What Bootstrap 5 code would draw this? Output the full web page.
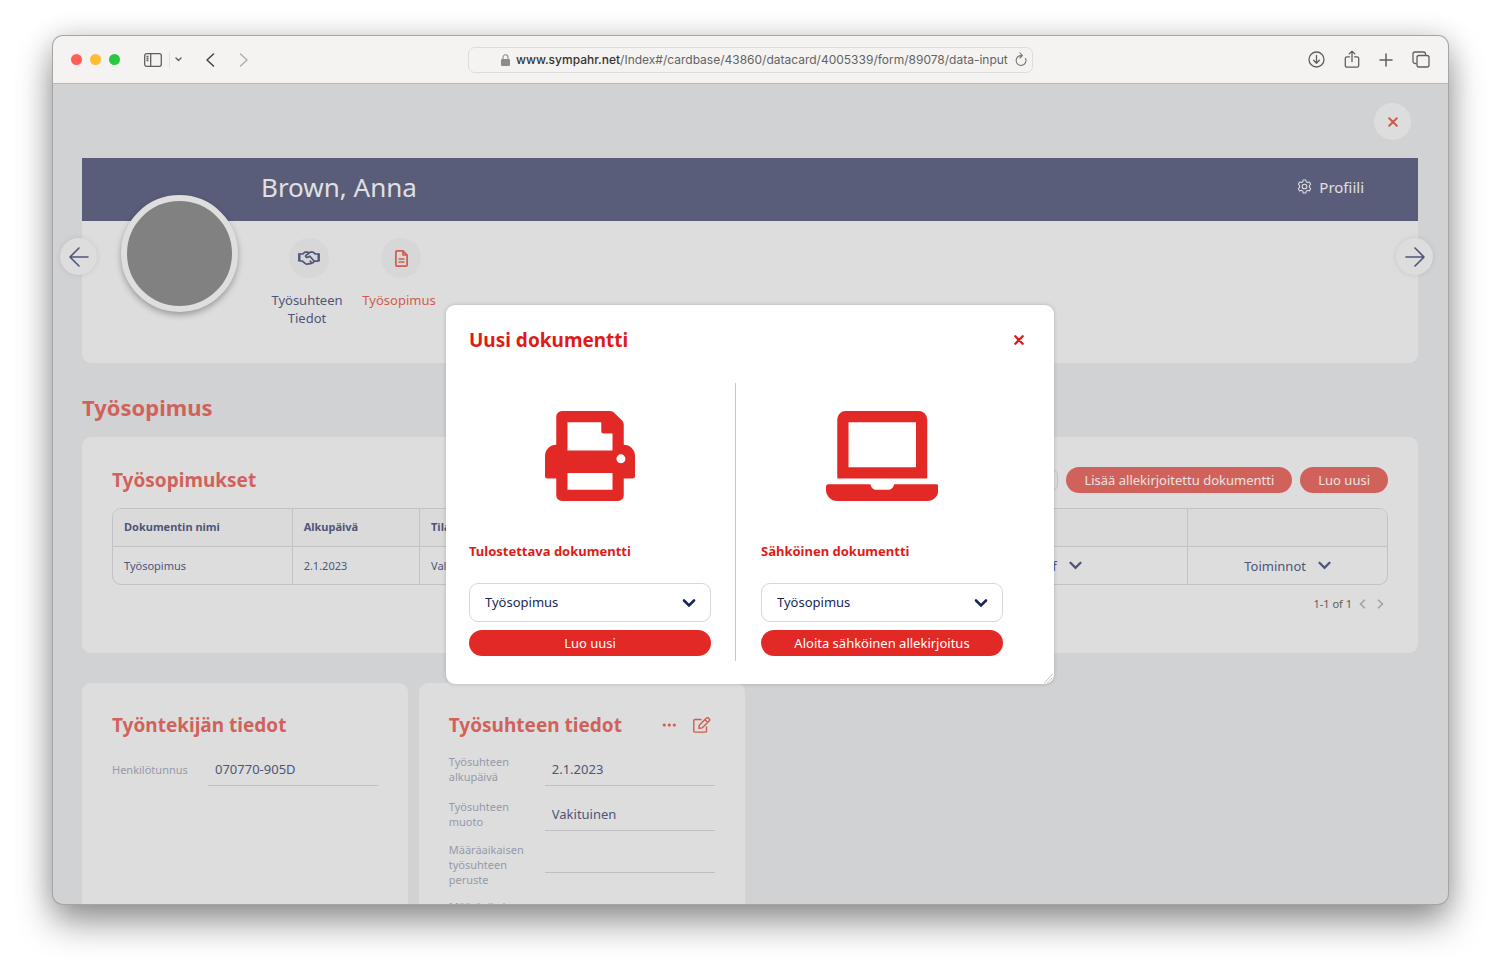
<!DOCTYPE html>
<html lang="fi">
<head>
<meta charset="utf-8">
<meta name="viewport" content="width=device-width, initial-scale=1">
<title>Brown, Anna – Työsopimus</title>
<link href="https://cdn.jsdelivr.net/npm/bootstrap@5.3.0/dist/css/bootstrap.min.css" rel="stylesheet">
<style>
:root{--page:#d1d2d4;--panel:#ddd;--navy:#4f5579;--banner:#595d7a;--coral:#d1625b;--line:#c1c2c6;--red:#e32925;--ink:#1b2559}
body{font-family:"Noto Sans",sans-serif;font-size:13px;line-height:18px;color:var(--navy);background:#fff}
.desktop{height:100vh;padding:36px 52px 69px 53px}
.browser{border-radius:10px;background:var(--page);box-shadow:0 0 0 1px #a5a5a5,0 18px 36px rgba(0,0,0,.42),0 0 28px rgba(0,0,0,.14)}
.toolbar{height:48px;background:#f4f3f1;border-bottom:1px solid #b8b9bc;color:#5f5f5f;padding:0 18px}
.toolbar-side{flex:1 1 0}
.dots{gap:8px}
.tools{gap:19px}
.dot{width:11px;height:11px;border-radius:50%}
.dot-close{background:#ff5f57}.dot-min{background:#febc2e}.dot-max{background:#28c840}
.split{width:1px;height:16px;background:#e2e1df;margin:0 5px 0 7px}
.plain{border:0;background:none;padding:0;color:inherit;display:flex;align-items:center;justify-content:center}
.address{width:565px;height:26px;border:1px solid #dddcda;border-radius:7px;padding:0 5px 0 32px;gap:6px}
.address svg{flex-shrink:0}
.url{font-family:Inter,sans-serif;font-size:12px;color:#636363;flex:1;white-space:nowrap}
.url b{font-weight:500;color:#333}
.viewport-area{min-height:0}
.content{padding:19px 30px 0 29px;height:100%}
.disc{width:37px;height:37px;border-radius:50%;background:var(--panel)}
.top-close{margin:0 7px 18px auto;color:#cf5c4e}
.panel{background:var(--panel);border-radius:9px}
.profile{height:205px;margin-bottom:29px}
.banner{height:63px;background:var(--banner);color:#e0e0e0;padding:0 54px 0 179px}
.banner h1{font-size:26px;line-height:36px;font-weight:400;margin:0 0 6px}
.banner a{font-size:15px;color:inherit;gap:7px;margin-bottom:6px}
.avatar{left:39px;top:37px;width:117px;height:117px;border-radius:50%;background:#818181;border:6px solid #dedede;box-shadow:0 3px 6px rgba(0,0,0,.3)}
.prev,.next{top:80px;color:var(--navy);box-shadow:0 0 5px rgba(80,85,121,.16)}
.prev{left:-22px}.next{right:-15px}
.tabs{padding:17px 0 0 179px}
.tabs a{width:92px;color:var(--navy);text-align:center}
.tabs a.current{color:#cf5c4e}
.tab-icon{width:40px;height:40px;border-radius:50%;background:#d7d7d7;margin:0 0 13px 4px}
h2,h3{font-weight:700;color:var(--coral);margin:0}
h2{font-size:22px;line-height:30px;margin-bottom:15px}
h3{font-size:19px;line-height:26px}
.list-panel{padding:30px 30px 40px;margin-bottom:30px}
.pill{height:26px;border:0;border-radius:13px;padding:0 18px;font-size:13px;line-height:26px;background:var(--coral);color:#e6e3e3}
.filter{width:160px;height:22px;border:1px solid var(--line);border-radius:6px;background:none}
.grid{width:100%;table-layout:fixed;border:1px solid var(--line);border-radius:9px;border-spacing:0;border-collapse:separate;margin:15px 0 10px;font-size:11px;overflow:hidden}
.grid th,.grid td{height:38px;padding:0 11px 1px;border-right:1px solid var(--line);white-space:nowrap}
.grid td{height:37px;padding-bottom:0}
.grid th{background:#dadada;border-bottom:1px solid var(--line)}
.grid tr>:last-child{border-right:0}
.grid button{font-size:13px;gap:12px;width:100%}
.pager{font-size:11px;color:#5c5c5c;gap:7px}
.pager svg{color:#a0a0a0}
.cards{--bs-gutter-x:11px}
.facts{padding:29px 30px 30px;min-height:440px}
.facts-head{margin-bottom:14px}
.action{color:#cf5c4e}
.fact{display:grid;grid-template-columns:96px 1fr;align-items:center;margin-bottom:11px}
.fact label{font-size:11px;line-height:15px;color:#9699ab;padding-right:12px}
.fact input{width:100%;min-width:0;height:34px;border:0;border-bottom:1px solid #bfbfc1;background:none;padding:0 7px;font-size:13px;color:var(--navy)}
.fact input.blank{height:16px}
.layer{inset:1px 1px 0 0;z-index:5}
.dialog{width:608px;background:#fff;border-radius:9px;padding:22px 23px 23px;box-shadow:0 0 4px rgba(0,0,0,.18);color:var(--ink)}
.dialog h3,.dialog h4{color:#e01b17}
.dialog-close{color:#e01b17;width:25px;height:26px}
.choices{margin-top:30px}
.choice{width:267px;padding:28px 25px 5px 0}
.choice+.choice{padding-right:0;padding-left:25px;border-left:1px solid #c9c9cd;margin-left:-1px;width:268px}
.choice svg.art{height:90px;display:block;margin:0 auto 40px;color:var(--red)}
.choice h4{font-size:13px;line-height:20px;font-weight:700;margin:0 0 22px}
.choice .form-select{height:39px;border:1px solid #d6d6de;border-radius:9px;font-size:13px;line-height:20px;color:var(--ink);padding:0 40px 1px 15px;margin-bottom:8px;background-size:14px 14px;background-position:right 14px center;background-image:url("data:image/svg+xml,%3Csvg xmlns='http://www.w3.org/2000/svg' viewBox='0 0 14 14'%3E%3Cpath d='M2 4.5l5 5 5-5' fill='none' stroke='%231b2559' stroke-width='2.6' stroke-linecap='round'/%3E%3C/svg%3E")}
.choice .pill{background:var(--red);color:#fff;width:100%}
.grip{right:1px;bottom:0;color:#b5b5b5}
</style>
</head>
<body>
<div class="desktop">
<div class="browser h-100 d-flex flex-column overflow-hidden">
  <header class="toolbar d-flex align-items-center flex-shrink-0">
    <div class="toolbar-side d-flex align-items-center">
      <div class="dots d-flex">
        <span class="dot dot-close"></span><span class="dot dot-min"></span><span class="dot dot-max"></span>
      </div>
      <button class="plain ms-4" aria-label="Sivupalkki"><svg width="18" height="14" viewBox="0 0 18 14" fill="none" stroke="currentColor" stroke-width="1.3"><rect x=".7" y=".7" width="16.6" height="12.6" rx="2"/><path d="M6.7 1v12M2.5 3.5h2M2.5 5.5h2M2.5 7.5h2"/></svg></button>
      <span class="split"></span>
      <button class="plain" aria-label="Valikko"><svg width="7" height="5" viewBox="0 0 7 5" fill="none" stroke="currentColor" stroke-width="1.4" stroke-linecap="round" stroke-linejoin="round"><path d="M1 1l2.500 2.500L6 1"/></svg></button>
      <button class="plain ms-4" aria-label="Takaisin"><svg width="9" height="14" viewBox="0 0 9 14" fill="none" stroke="#444" stroke-width="1.500" stroke-linecap="round" stroke-linejoin="round"><path d="M7.500 1l-6.500 6 6.500 6"/></svg></button>
      <button class="plain ms-4" aria-label="Eteenpäin"><svg width="9" height="14" viewBox="0 0 9 14" fill="none" stroke="#b1b0af" stroke-width="1.500" stroke-linecap="round" stroke-linejoin="round"><path d="M1.500 1l6.500 6-6.500 6"/></svg></button>
    </div>
    <div class="address d-flex align-items-center">
      <svg width="9" height="12" viewBox="0 0 9 12"><rect y="5" width="9" height="7" rx="1.300" fill="#8c8c8c"/><path d="M2 5.500V3.300a2.500 2.500 0 0 1 5 0v2.200" fill="none" stroke="#8c8c8c" stroke-width="1.100"/></svg>
      <span class="url"><b>www.sympahr.net</b>/Index#/cardbase/43860/datacard/4005339/form/89078/data-input</span>
      <button class="plain" aria-label="Päivitä"><svg width="12" height="15" viewBox="0 0 12 15" fill="none" stroke="#777" stroke-width="1.100" stroke-linecap="round" stroke-linejoin="round"><path d="M10.500 6.500A4.900 4.900 0 1 1 7 3.700M5 1l2.300 2.700L5 6"/></svg></button>
    </div>
    <div class="toolbar-side tools d-flex align-items-center justify-content-end">
      <button class="plain" aria-label="Lataukset"><svg width="17" height="17" viewBox="0 0 17 17" fill="none" stroke="currentColor" stroke-width="1.300" stroke-linecap="round" stroke-linejoin="round"><circle cx="8.500" cy="8.500" r="7.500"/><path d="M8.500 4.500v7.500M5.600 9.300l2.900 2.900 2.900-2.900"/></svg></button>
      <button class="plain" aria-label="Jaa"><svg width="16" height="19" viewBox="0 0 16 19" fill="none" stroke="currentColor" stroke-width="1.300" stroke-linecap="round" stroke-linejoin="round"><path d="M5.500 6.800H3a1.700 1.700 0 0 0-1.700 1.700v7A1.700 1.700 0 0 0 3 17.200h10a1.700 1.700 0 0 0 1.700-1.700v-7A1.700 1.700 0 0 0 13 6.800h-2.500M8 11.500V1.200M5.200 3.900L8 1.200l2.800 2.700"/></svg></button>
      <button class="plain" aria-label="Uusi välilehti"><svg width="14" height="14" viewBox="0 0 14 14" fill="none" stroke="currentColor" stroke-width="1.500" stroke-linecap="round"><path d="M7 1v12M1 7h12"/></svg></button>
      <button class="plain" aria-label="Välilehdet"><svg width="18" height="17" viewBox="0 0 18 17" fill="none" stroke="currentColor" stroke-width="1.300"><rect x="5" y="4.500" width="12" height="11.500" rx="2"/><path d="M4.500 12.500H3a2 2 0 0 1-2-2V3a2 2 0 0 1 2-2h8.500a2 2 0 0 1 2 2v1"/></svg></button>
    </div>
  </header>

  <div class="viewport-area position-relative flex-grow-1 overflow-hidden">
    <main class="content">
      <button class="plain disc top-close" aria-label="Sulje kortti"><svg width="10" height="10" viewBox="0 0 10 10" stroke="currentColor" stroke-width="2" stroke-linecap="round"><path d="M1.200 1.200l7.600 7.600M8.800 1.200L1.200 8.800"/></svg></button>

      <section class="panel profile position-relative">
        <div class="banner d-flex align-items-center justify-content-between">
          <h1>Brown, Anna</h1>
          <a href="#" class="d-flex align-items-center text-decoration-none"><svg width="15" height="15" viewBox="0 0 16 16" fill="none" stroke="currentColor" stroke-width="1.100" stroke-linejoin="round"><circle cx="8" cy="8" r="2.500"/><path d="M6.600 1h2.800l.4 1.900 1.500.9 1.900-.6 1.400 2.400L13.200 7v2l1.400 1.300-1.400 2.400-1.900-.6-1.500.9L9.400 15H6.600l-.4-2-1.500-.9-1.900.6-1.400-2.400L2.800 9V7L1.400 5.600l1.400-2.400 1.900.6 1.500-.9z"/></svg>Profiili</a>
        </div>
        <nav class="tabs d-flex">
          <a href="#" class="d-flex flex-column align-items-center text-decoration-none"><span class="tab-icon d-flex align-items-center justify-content-center"><svg width="22" height="14" viewBox="0 0 22 14" fill="none" stroke="currentColor" stroke-width="1.700" stroke-linejoin="round" stroke-linecap="round"><path d="M1.300 2.300v8.200M20.700 2.300v8.200" stroke-width="2.400" stroke-linecap="butt"/><path d="M2.500 3h2.200L7 1.200h2.800L11 2l1.200-.8H15L17.300 3h2.200M2.500 10h1.700l3.300 2.600c1 .7 2.300.6 3 0 1.200.6 2.500.2 3-.8 1.200.2 2.300-.3 2.600-1.600h3.400M11 2L8 4.300c-.9.900.3 2.600 1.700 2l2.100-1.100 4.300 4.800M12.300 10.200l1.200 1.600"/></svg></span>Työsuhteen<br>Tiedot</a>
          <a href="#" class="current d-flex flex-column align-items-center text-decoration-none" aria-current="page"><span class="tab-icon d-flex align-items-center justify-content-center"><svg width="13" height="17" viewBox="0 0 13 17" fill="none" stroke="currentColor" stroke-width="1.700" stroke-linejoin="round"><path d="M8 .9H2A1.100 1.100 0 0 0 .9 2v13A1.100 1.100 0 0 0 2 16.100h9a1.100 1.100 0 0 0 1.100-1.100V5zM8 .9V5h4.100M3.500 9h6M3.500 12h6"/></svg></span>Työsopimus</a>
        </nav>
        <div class="avatar position-absolute"></div>
        <button class="plain disc prev position-absolute" aria-label="Edellinen"><svg width="20" height="20" viewBox="0 0 20 20" fill="none" stroke="currentColor" stroke-width="1.600" stroke-linecap="round" stroke-linejoin="round"><path d="M19 10H1M10 1l-9 9 9 9"/></svg></button>
        <button class="plain disc next position-absolute" aria-label="Seuraava"><svg width="20" height="20" viewBox="0 0 20 20" fill="none" stroke="currentColor" stroke-width="1.600" stroke-linecap="round" stroke-linejoin="round"><path d="M1 10h18M10 1l9 9-9 9"/></svg></button>
      </section>

      <h2>Työsopimus</h2>
      <section class="panel list-panel">
        <div class="d-flex align-items-center gap-2">
          <h3 class="me-auto">Työsopimukset</h3>
          <input class="filter" type="text" aria-label="Suodata">
          <button class="pill">Lisää allekirjoitettu dokumentti</button>
          <button class="pill">Luo uusi</button>
        </div>
        <table class="grid">
          <colgroup><col style="width:14.1%"><col style="width:10%"><col style="width:12%"><col><col style="width:20.2%"><col style="width:15.6%"></colgroup>
          <thead><tr><th>Dokumentin nimi</th><th>Alkupäivä</th><th>Tila</th><th></th><th></th><th></th></tr></thead>
          <tbody><tr><td>Työsopimus</td><td>2.1.2023</td><td>Valmis</td><td></td>
            <td><button class="plain">Pdf<svg width="13" height="9" viewBox="0 0 13 9" fill="none" stroke="currentColor" stroke-width="2.300" stroke-linecap="round"><path d="M1.500 1.800l5 5 5-5"/></svg></button></td>
            <td><button class="plain">Toiminnot<svg width="13" height="9" viewBox="0 0 13 9" fill="none" stroke="currentColor" stroke-width="2.300" stroke-linecap="round"><path d="M1.500 1.800l5 5 5-5"/></svg></button></td></tr></tbody>
        </table>
        <div class="pager d-flex align-items-center justify-content-end pe-1">
          <span>1-1 of 1</span>
          <button class="plain" aria-label="Edellinen sivu"><svg width="7" height="10" viewBox="0 0 7 10" fill="none" stroke="currentColor" stroke-width="1.500"><path d="M6 .8L1.500 5 6 9.200"/></svg></button>
          <button class="plain ms-1" aria-label="Seuraava sivu"><svg width="7" height="10" viewBox="0 0 7 10" fill="none" stroke="currentColor" stroke-width="1.500"><path d="M1 .8L5.500 5 1 9.200"/></svg></button>
        </div>
      </section>

      <div class="row row-cols-4 cards">
        <div class="col">
          <section class="panel facts">
            <h3 class="facts-head">Työntekijän tiedot</h3>
            <div class="fact"><label for="hetu">Henkilötunnus</label><input id="hetu" value="070770-905D" readonly></div>
          </section>
        </div>
        <div class="col">
          <section class="panel facts">
            <div class="facts-head d-flex align-items-center pe-1">
              <h3 class="me-auto text-nowrap">Työsuhteen tiedot</h3>
              <button class="plain action me-3" aria-label="Lisää toimintoja"><svg width="15" height="4" viewBox="0 0 15 4" fill="currentColor"><circle cx="2.300" cy="2" r="1.600"/><circle cx="7.300" cy="2" r="1.600"/><circle cx="12.300" cy="2" r="1.600"/></svg></button>
              <button class="plain action" aria-label="Muokkaa"><svg width="18" height="16" viewBox="0 0 18 16" fill="none" stroke="currentColor" stroke-width="1.400" stroke-linejoin="round"><path d="M8.500 2.500H2A1.200 1.200 0 0 0 .8 3.700v10.200A1.200 1.200 0 0 0 2 15.100h10.300a1.200 1.200 0 0 0 1.200-1.200V9.500M6.300 8.200L13.500 1.100c.6-.5 1.300-.5 1.800 0l1 1c.5.5.5 1.200 0 1.700l-7.200 7.100-3.200.5zM12 2.700l2.800 2.700"/></svg></button>
            </div>
            <div class="fact"><label for="alku">Työsuhteen alkupäivä</label><input id="alku" value="2.1.2023" readonly></div>
            <div class="fact"><label for="muoto">Työsuhteen muoto</label><input id="muoto" value="Vakituinen" readonly></div>
            <div class="fact"><label for="peruste">Määräaikaisen työsuhteen peruste</label><input id="peruste" class="blank" readonly></div>
            <div class="fact"><label for="loppu">Määräaikaisen</label><input id="loppu" class="blank" readonly></div>
          </section>
        </div>
      </div>
    </main>

    <div class="layer position-absolute d-flex align-items-center justify-content-center">
      <div class="dialog position-relative" role="dialog" aria-labelledby="dlg-title">
        <div class="d-flex align-items-center justify-content-between">
          <h3 id="dlg-title">Uusi dokumentti</h3>
          <button class="plain dialog-close" aria-label="Sulje"><svg width="10" height="10" viewBox="0 0 10 10" stroke="currentColor" stroke-width="2.300" stroke-linecap="round"><path d="M1.300 1.300l7.400 7.400M8.700 1.300L1.300 8.700"/></svg></button>
        </div>
        <div class="choices d-flex">
          <div class="choice">
            <svg class="art" viewBox="0 0 16 16" fill="currentColor" fill-rule="evenodd"><path d="M3 0H11.600a1 1 0 0 1 .7.300L13.700 1.700a1 1 0 0 1 .3.700V6a2 2 0 0 1 2 2V11.600a.4.400 0 0 1-.4.400H14V15a1 1 0 0 1-1 1H3a1 1 0 0 1-1-1V12H.4a.4.400 0 0 1-.4-.4V8a2 2 0 0 1 2-2V1a1 1 0 0 1 1-1zM4 2V7H12V4H10.400a.4.400 0 0 1-.4-.4V2zM4 11V14H12V11zM13.500 7.700a.8.800 0 1 0 0 1.600.8.800 0 0 0 0-1.600z"/></svg>
            <h4 id="l1">Tulostettava dokumentti</h4>
            <select class="form-select" aria-labelledby="l1"><option>Työsopimus</option></select>
            <button class="pill">Luo uusi</button>
          </div>
          <div class="choice">
            <svg class="art" viewBox="0 0 20 16" fill="currentColor" fill-rule="evenodd"><path d="M3.500 0h13A1.500 1.500 0 0 1 18 1.500V12H2V1.500A1.500 1.500 0 0 1 3.500 0zM4 2v8h12V2zM.4 13H7.900c.1.600.5 1 1.100 1h2c.6 0 1-.4 1.100-1h7.500a.4.400 0 0 1 .4.400V14a2 2 0 0 1-2 2H2a2 2 0 0 1-2-2v-.6a.4.400 0 0 1 .4-.4z"/></svg>
            <h4 id="l2">Sähköinen dokumentti</h4>
            <select class="form-select" aria-labelledby="l2"><option>Työsopimus</option></select>
            <button class="pill">Aloita sähköinen allekirjoitus</button>
          </div>
        </div>
        <svg class="grip position-absolute" width="9" height="10" viewBox="0 0 9 10" fill="none" stroke="currentColor" stroke-width=".8"><path d="M0 9.500L8.500 0M3 9.500l5.500-6M6 9.500L8.500 7"/></svg>
      </div>
    </div>
  </div>
</div>
</div>
<script src="https://cdn.jsdelivr.net/npm/bootstrap@5.3.0/dist/js/bootstrap.bundle.min.js"></script>
</body>
</html>
